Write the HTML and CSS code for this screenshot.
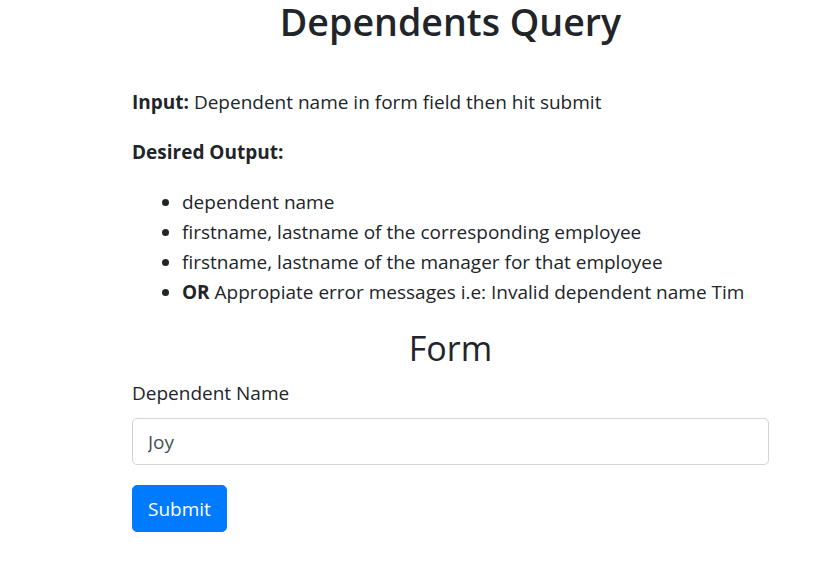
FILE: index.html
```html
<!DOCTYPE html>
<html lang="en">
<head>
<meta charset="utf-8">
<title>Dependents Query</title>
<link rel="stylesheet" href="styles.css">
</head>
<body>
<div class="container">
  <h1 class="title">Dependents Query</h1>
  <p class="para"><strong>Input:</strong> Dependent name in form field then hit submit</p>
  <p class="para"><strong>Desired Output:</strong></p>
  <ul class="list">
    <li>dependent name</li>
    <li>firstname, lastname of the corresponding employee</li>
    <li>firstname, lastname of the manager for that employee</li>
    <li><strong>OR</strong> Appropiate error messages i.e: Invalid dependent name Tim</li>
  </ul>
  <h3 class="form-title">Form</h3>
  <form class="form">
    <div class="form-group">
      <label class="label" for="dep">Dependent Name</label>
      <input class="form-control" id="dep" type="text" value="Joy">
    </div>
    <button class="btn" type="button">Submit</button>
  </form>
</div>
</body>
</html>
```
FILE: styles.css
```css
html, body {
  margin: 0;
  padding: 0;
  background: #fff;
}
body {
  font-family: "Open Sans", "Noto Sans", sans-serif;
  font-size: 19px;
  line-height: 30px;
  color: #212529;
}
.container {
  width: 637px;
  margin-left: 132px;
}
.title {
  font-size: 37.6px;
  font-weight: 600;
  line-height: 44px;
  margin: 0 0 43px;
  text-align: center;
}
.para {
  margin: 0 0 20px;
}
strong {
  font-weight: 700;
}
.list {
  margin: 0 0 20px;
  padding-left: 50px;
}
.form-title {
  font-size: 34px;
  font-weight: 500;
  line-height: 42px;
  margin: 0 0 9px;
  text-align: center;
}
.form-group {
  margin-bottom: 20px;
}
.label {
  display: inline-block;
  margin-bottom: 10px;
}
.form-control {
  display: block;
  box-sizing: border-box;
  width: 100%;
  height: 47px;
  padding: 7.5px 15px;
  font-family: inherit;
  font-size: 19px;
  line-height: 30px;
  color: #495057;
  background: #fff;
  border: 1px solid #ced4da;
  border-radius: 5px;
  outline: none;
}
.btn {
  display: inline-block;
  box-sizing: border-box;
  height: 47px;
  padding: 7.5px 15px;
  font-family: inherit;
  font-size: 19px;
  line-height: 30px;
  color: #fff;
  background: #007bff;
  border: 1px solid #007bff;
  border-radius: 5px;
  cursor: pointer;
}
```
